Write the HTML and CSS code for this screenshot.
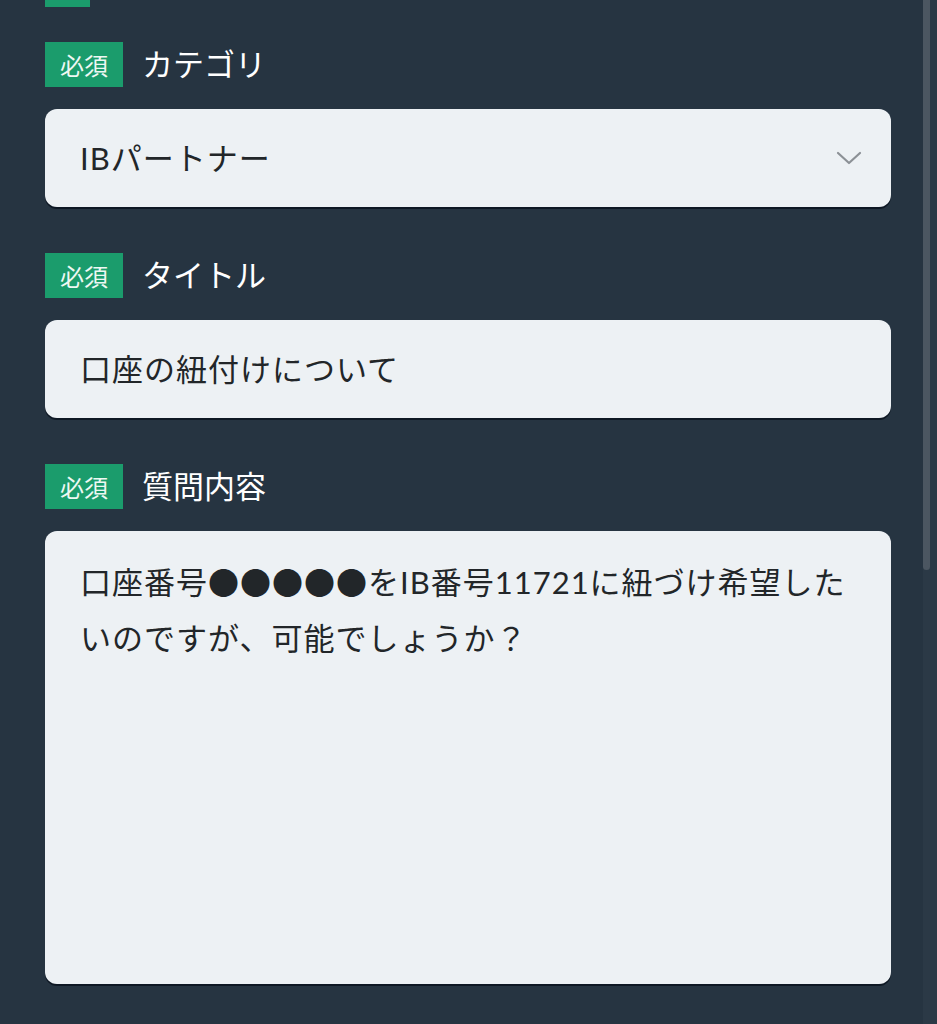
FILE: index.html
```html
<!DOCTYPE html>
<html lang="ja">
<head>
<meta charset="utf-8">
<link rel="stylesheet" href="styles.css">
</head>
<body>
<div class="page">
  <div class="tab-mark"></div>
  <div class="field first">
    <div class="label-row"><span class="badge">必須</span><span class="label">カテゴリ</span></div>
    <div class="box select">
      <span class="value">IBパートナー</span>
      <svg class="chev" width="26" height="16" viewBox="0 0 26 16"><path d="M2 3 L13 13 L24 3" fill="none" stroke="#8c9196" stroke-width="2.2" stroke-linecap="round" stroke-linejoin="round"/></svg>
    </div>
  </div>
  <div class="field">
    <div class="label-row"><span class="badge">必須</span><span class="label">タイトル</span></div>
    <div class="box input"><span class="value">口座の紐付けについて</span></div>
  </div>
  <div class="field">
    <div class="label-row"><span class="badge">必須</span><span class="label">質問内容</span></div>
    <div class="box textarea"><div class="text">口座番号<span class="dots">●●●●●</span>をIB番号11721に紐づけ希望したいのですが、可能でしょうか？</div></div>
  </div>
</div>
<div class="scrollbar"><div class="thumb"></div></div>
</body>
</html>
```
FILE: styles.css
```css
html, body {
  margin: 0;
  padding: 0;
  background: #263441;
}
body {
  font-family: "Lato", "Noto Sans CJK JP", sans-serif;
  width: 937px;
  height: 1024px;
  overflow: hidden;
  position: relative;
}
.page {
  padding-left: 45px;
  width: 846px;
  display: flex;
  flex-direction: column;
}
.tab-mark {
  width: 45px;
  height: 7px;
  background: #1b9c6c;
}
.field {
  display: flex;
  flex-direction: column;
  gap: 22px;
  margin-top: 46px;
}
.field.first {
  margin-top: 35px;
}
.label-row {
  display: flex;
  align-items: center;
  gap: 19px;
  height: 45px;
}
.badge {
  width: 78px;
  height: 45px;
  background: #1b9c6c;
  color: #eef8f3;
  font-size: 24px;
  display: flex;
  align-items: center;
  justify-content: center;
}
.label {
  color: #ffffff;
  font-size: 31px;
  line-height: 45px;
}
.box {
  background: #edf1f4;
  border-radius: 12px;
  box-shadow: 0 2px 0 #0e1824;
  box-sizing: border-box;
  color: #222629;
  font-size: 31px;
  letter-spacing: 1px;
}
.select, .input {
  height: 98px;
  display: flex;
  align-items: center;
  padding: 0 30px 0 35px;
}
.select {
  justify-content: space-between;
}
.chev {
  margin-right: -1px;
}
.value {
  line-height: 40px;
}
.textarea {
  height: 453px;
  padding: 22px 35px;
}
.text {
  line-height: 56px;
}
.dots {
  font-family: "Noto Sans CJK JP", sans-serif;
}
.scrollbar {
  position: absolute;
  top: 0;
  right: 0;
  width: 14px;
  height: 1024px;
  background: #2b3946;
}
.thumb {
  width: 7px;
  height: 570px;
  background: #4b5661;
  border-radius: 0 0 4px 4px;
}
```
